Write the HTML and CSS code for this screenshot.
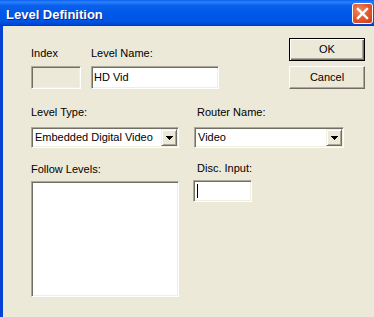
FILE: index.html
```html
<!DOCTYPE html>
<html lang="en">
<head>
    <meta charset="UTF-8">
    <meta name="viewport" content="width=device-width, initial-scale=1.0">
    <title>Level Definition</title>
    <link rel="stylesheet" href="styles.css">
</head>
<body>
    <div class="window">
        <div class="titlebar">
            <span class="title">Level Definition</span>
            <div class="close">
                <svg width="19" height="19" viewBox="0 0 19 19">
                    <path d="M5 5 L14 14 M14 5 L5 14" stroke="#ffffff" stroke-width="2.4" stroke-linecap="square" fill="none"/>
                </svg>
            </div>
        </div>
        <div class="client">
            <div class="row row-top">
                <div class="field field-index">
                    <label>Index</label>
                    <div class="edit sunken disabled"></div>
                </div>
                <div class="field field-name">
                    <label>Level Name:</label>
                    <div class="edit sunken">HD Vid</div>
                </div>
                <div class="buttons">
                    <div class="button default">OK</div>
                    <div class="button">Cancel</div>
                </div>
            </div>
            <div class="row row-combo">
                <div class="field col-left">
                    <label>Level Type:</label>
                    <div class="combo sunken">
                        <span class="combo-text">Embedded Digital Video</span>
                        <span class="combo-btn raised">
                            <svg width="7" height="4" viewBox="0 0 7 4" shape-rendering="crispEdges">
                                <path d="M0 0h7v1h-1v1h-1v1h-1v1h-1v-1h-1v-1h-1v-1h-1z" fill="#000000"/>
                            </svg>
                        </span>
                    </div>
                </div>
                <div class="field col-right">
                    <label>Router Name:</label>
                    <div class="combo sunken router">
                        <span class="combo-text">Video</span>
                        <span class="combo-btn raised">
                            <svg width="7" height="4" viewBox="0 0 7 4" shape-rendering="crispEdges">
                                <path d="M0 0h7v1h-1v1h-1v1h-1v1h-1v-1h-1v-1h-1v-1h-1z" fill="#000000"/>
                            </svg>
                        </span>
                    </div>
                </div>
            </div>
            <div class="row row-bottom">
                <div class="field col-left">
                    <label>Follow Levels:</label>
                    <div class="listbox sunken"></div>
                </div>
                <div class="field col-right disc">
                    <label>Disc. Input:</label>
                    <div class="edit sunken edit-disc"><span class="caret"></span></div>
                </div>
            </div>
        </div>
    </div>
</body>
</html>
```

FILE: styles.css
```css
body {
    margin: 0;
    font-family: 'Liberation Sans', Arial, sans-serif;
    font-size: 11px;
    color: #000000;
    background-color: #ece9d8;
}
.window {
    width: 374px;
    height: 317px;
    display: flex;
    flex-direction: column;
    overflow: hidden;
}
.titlebar {
    height: 26px;
    box-sizing: border-box;
    display: flex;
    align-items: center;
    justify-content: space-between;
    padding: 0 1px 0 6px;
    background: linear-gradient(to bottom, #0a5ef3 0%, #2b83f8 8%, #0b61ed 20%, #0058e8 50%, #0055e5 80%, #0046d6 94%, #0033b8 100%);
}
.title {
    padding-top: 2px;
    font-weight: bold;
    font-size: 13px;
    color: #ffffff;
    text-shadow: 1px 1px #0b2591;
}
.close {
    width: 21px;
    height: 21px;
    box-sizing: border-box;
    border: 1px solid #ffffff;
    border-radius: 3px;
    background: radial-gradient(circle at 35% 35%, #f08a66 0%, #e2582f 50%, #c63c1b 100%);
    display: flex;
}
.client {
    flex: 1;
    border-left: 3px solid #0b58e8;
    border-image: linear-gradient(to right, #0842d4, #1a6bf4, #0a56e6) 1;
    padding: 12px 0 0 28px;
}
.row {
    display: flex;
    align-items: flex-start;
}
.field {
    display: flex;
    flex-direction: column;
}
label {
    display: block;
    height: 13px;
    line-height: 13px;
}
.sunken {
    box-sizing: border-box;
    border: 1px solid;
    border-color: #aca899 #ffffff #ffffff #aca899;
    box-shadow: inset 1px 1px #716f64, inset -1px -1px #f1efe2;
    background-color: #ffffff;
}
.raised {
    box-sizing: border-box;
    border: 1px solid;
    border-color: #f1efe2 #716f64 #716f64 #f1efe2;
    box-shadow: inset 1px 1px #ffffff, inset -1px -1px #aca899;
    background-color: #ece9d8;
}
.edit {
    height: 23px;
    line-height: 21px;
    padding-left: 2px;
    margin-top: 6px;
}
.edit.disabled {
    background-color: #ece9d8;
}
.field-index {
    width: 50px;
    margin-top: 9px;
}
.field-name {
    width: 128px;
    margin-top: 9px;
    margin-left: 10px;
}
.buttons {
    width: 76px;
    margin-left: 70px;
    display: flex;
    flex-direction: column;
    gap: 5px;
}
.button {
    height: 23px;
    box-sizing: border-box;
    line-height: 21px;
    text-align: center;
    background-color: #ece9d8;
    border: 1px solid;
    border-color: #ffffff #716f64 #716f64 #ffffff;
    box-shadow: inset -1px -1px #aca899;
}
.button.default {
    border-color: #000000;
    box-shadow: inset 1px 1px #ffffff, inset -1px -1px #716f64, inset -2px -2px #aca899;
}
.row-combo {
    margin-top: 17px;
}
.col-left {
    width: 148px;
}
.col-right {
    margin-left: 15px;
}
.col-right label {
    padding-left: 3px;
}
.combo {
    height: 21px;
    margin-top: 8px;
    display: flex;
}
.combo.router {
    width: 150px;
}
.combo-text {
    flex: 1;
    padding-left: 3px;
    line-height: 19px;
    white-space: nowrap;
    overflow: hidden;
}
.combo-btn {
    width: 16px;
    height: 17px;
    margin: 1px 1px 1px 0;
    display: flex;
    align-items: center;
    justify-content: center;
}
.row-bottom {
    margin-top: 15px;
}
.listbox {
    height: 116px;
    margin-top: 5px;
}
.disc {
    margin-top: -1px;
}
.edit-disc {
    width: 59px;
    height: 22px;
    margin-top: 5px;
    margin-left: -1px;
    padding: 0;
}
.caret {
    display: block;
    width: 1px;
    height: 14px;
    margin: 3px 0 0 3px;
    background-color: #000000;
}
```
